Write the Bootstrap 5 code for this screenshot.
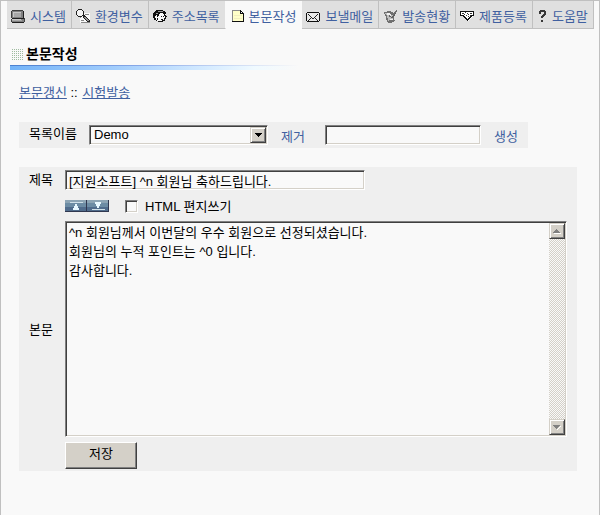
<!DOCTYPE html>
<html lang="ko">
<head>
<meta charset="utf-8">
<meta name="viewport" content="width=device-width, initial-scale=1">
<title>본문작성</title>
<link rel="stylesheet" href="https://cdn.jsdelivr.net/npm/bootstrap@5.3.0/dist/css/bootstrap.min.css">
<style>
body, input, textarea, select, button { font-family: "Liberation Sans", "Noto Sans CJK KR", sans-serif; font-size: 13px; line-height: 19px; color: #000; }
body { background: #f9f9f9; }
a { color: #4060a0; }
svg { display: block; flex: none; shape-rendering: crispEdges; }
.page-frame { border: 1px solid #c0c0c0; border-bottom: 0; }
.tabs { margin: 0 6px; }
.tab { height: 28px; gap: 5px; padding: 3px 5px 0 4px; background: #e0e0e0; border-right: 1px solid #c0c0c0; border-bottom: 1px solid #c0c0c0; text-decoration: none; white-space: nowrap; }
.tab span { padding-top: 1px; }
.tab.current { background: #f9f9f9; border-color: #f9f9f9; }
.tab.before { border-right-color: #f9f9f9; }
.heading { margin: 16px 0 0 10px; gap: 3px; }
.heading h1 { font-size: 14px; line-height: 19px; font-weight: 700; margin: 0; }
.dots { width: 12px; height: 12px; background: conic-gradient(#a0bca0 25%, transparent 0) 0 0 / 2px 2px; }
.rule { height: 5px; max-width: 288px; margin-left: 9px; margin-top: 1px; border-top: 1px solid; border-image: linear-gradient(90deg, #4a80d0, #88a8e8 45%, #c8d8f4 75%, #f9f9f9) 1; background: linear-gradient(90deg, #74b4f8, #a0ccfc 35%, #d0e8ff 65%, #f0faff 85%, #f9f9f9); }
.links { margin: 13px 0 0 18px; }
.links a + a { margin-left: 1px; }
.panel { background: #efefef; margin-left: 18px; }
.list-panel { margin-top: 20px; height: 26px; padding: 3px 10px; width: fit-content; }
.list-panel > label { width: 60px; line-height: 18px; }
.list-panel > a { padding: 2px 0 0 13px; }
.edit-panel { margin-top: 19px; margin-right: 22px; padding: 3px 10px 2px; }
.edit-label { width: 36px; flex: none; }
.sunken { border: 1px solid; border-color: #808080 #fff #fff #808080; box-shadow: inset 1px 1px #404040, inset -1px -1px #d4d0c8; background: #f9f9f9; border-radius: 0; }
.line-box { height: 20px; padding: 0 3px; line-height: 18px; }
.list-select { width: 179px; }
.list-select select { appearance: none; border: 0; background: none; padding: 0 20px 0 4px; height: 17px; line-height: 17px; width: 100%; display: block; }
.raised { background: #d4d0c8; border: 1px solid; border-color: #d4d0c8 #404040 #404040 #d4d0c8; box-shadow: inset 1px 1px #fff, inset -1px -1px #808080; padding: 0; border-radius: 0; }
.drop-mark { top: 1px; right: 1px; width: 16px; height: 16px; pointer-events: none; }
.new-name { width: 156px; }
.subject { width: 300px; }
.size-btn { border: 0; padding: 0; }
.size-row { padding: 6px 0 5px; height: 31px; }
.tick { appearance: none; width: 13px; height: 13px; margin: 0 7px 0 16px; }
.tick:checked { background: #404040; background-clip: content-box; padding: 3px; }
.body-box { height: 216px; padding: 1px; }
.body-box textarea { border: 0; background: none; resize: none; outline: 0; padding: 0 2px; min-width: 0; overflow: hidden; }
.bar { width: 16px; background: repeating-conic-gradient(#d4d0c8 0 25%, #f9f9f9 0 50%) 0 0 / 2px 2px; }
.bar button { width: 16px; height: 16px; }
.save { width: 72px; height: 27px; margin-top: 5px; border-color: #fff #404040 #404040 #fff; box-shadow: inset -1px -1px #808080; padding-bottom: 4px; }
</style>
<script src="https://cdn.jsdelivr.net/npm/bootstrap@5.3.0/dist/js/bootstrap.bundle.min.js"></script>
</head>
<body>
<div class="page-frame min-vh-100">
  <nav class="tabs d-flex">
    <a class="tab d-flex align-items-center" href="#"><svg width="14" height="14" viewBox="0 0 14 14"><path fill="#404040" d="M1 1h11v1h1v7h1v4h-1v1H1v-1H0v-3h1V9H0V2h1z"/><path fill="#808080" d="M1 2h11v7H1zM1 10h12v3H1z"/><path fill="#c8c8c8" d="M2 3h8v5H2zM1 10h9v1H1z"/><path fill="#a8a8a8" d="M3 4h7v4H3zM1 11h10v1H1z"/><path fill="#202020" d="M12 2h1v7h-1zM1 9h12v1H1zM1 13h12v1H1z"/></svg><span>시스템</span></a>
    <a class="tab d-flex align-items-center" href="#"><svg width="14" height="14" viewBox="0 0 14 14"><path fill="#f9f9f9" d="M5 4h9v10H4V8z"/><path fill="#888" d="M9 5h4v1H9zM4 8h1v1H4zM5 11h3v1H5zM5 13h9v1H5zM11 11h2v1h-2z"/><path fill="#222" d="M2 0h4v1H2zM1 1h1v1H1zM6 1h1v1H6zM0 2h1v4H0zM7 2h1v4H7zM1 6h1v1H1zM2 7h4v1H2zM6 6h2v1H6zM7 7h2v1H7zM8 6h1v1H8zM7 8h1v1H7zM9 7h1v1H9zM8 9h1v1H8zM10 8h1v1h-1zM9 10h1v1H9zM11 9h1v1h-1zM10 11h1v1h-1zM12 10h1v1h-1zM11 12h3v1h-3zM13 11h1v1h-1z"/><path fill="#f4f4f4" d="M2 1h4v1h1v4H6v1H2V6H1V2h1z"/><path fill="#999" d="M8 8h2v1H8zM9 9h2v1H9zM10 10h2v1h-2zM11 11h2v1h-2z"/></svg><span>환경변수</span></a>
    <a class="tab before d-flex align-items-center" href="#"><svg width="14" height="14" viewBox="0 0 14 14"><path fill="#f9f9f9" d="M3 3h8l2 3v3l-3 4H5L1 9V5z"/><path fill="#111" d="M3 1h7v1h2v1h1v2h-1v1h1v1h1v1h-1v2h-1v2h-2v1H5v-1h4v-1h2V9h1V7h-1V5h-1V4H7v1H6v2H5v1H4V6H3v1H2v2h1v2h1v1H3v-1H1V9H0V4h1V3h1V2h1zM8 7h1v1H8zM10 7h1v1h-1zM8 10h2v1H8zM4 9h1v2H4z"/><path fill="#999" d="M5 2h5v1H5zM3 4h2v1H3z"/></svg><span>주소목록</span></a>
    <a class="tab current d-flex align-items-center" href="#" aria-current="page"><svg width="14" height="14" viewBox="0 0 14 14"><path fill="#ffffc8" d="M3 2h8l2 3v8H3z"/><path fill="#888" d="M2 1h9v1H3v10H2z"/><path fill="#f2eec0" d="M4 6h8v1H4zM4 9h8v1H4z"/><path fill="#111" d="M10 1h1v1h1v1h1v1h1v9H2v-1h11V5h-3z"/><path fill="#fff" d="M11 3h1v1h-1z"/></svg><span>본문작성</span></a>
    <a class="tab d-flex align-items-center" href="#"><svg width="14" height="14" viewBox="0 0 14 14"><path fill="#111" d="M0 4h1V3h12v1h1v8h-1v1H1v-1H0z"/><path fill="#e8e8e8" d="M1 4h12v8H1z"/><path fill="#222" d="M2 5h1v1H2zM3 6h1v1H3zM4 7h1v1H4zM5 8h1v1H5zM6 9h2v1H6zM8 8h1v1H8zM9 7h1v1H9zM10 6h1v1h-1zM11 5h1v1h-1zM4 9h1v1H4zM3 10h1v1H3zM2 11h1v1H2zM9 9h1v1H9zM10 10h1v1h-1zM11 11h1v1h-1z"/></svg><span>보낼메일</span></a>
    <a class="tab d-flex align-items-center" href="#"><svg width="14" height="14" viewBox="0 0 14 14"><path fill="#707070" d="M1 3h3V2h4v1h2v1h1V3h1V2h1V1h1v2h-1v1h-1v2h-1v5h1v1h-1v1H9v1H5v-1H4v-2H3V7H2V5H1z"/><path fill="#bdbdbd" d="M2 4h5v1h1v1h3v2h-1v3H6v1H5V9H4V6H3V5H2z"/><path fill="#f0f0f0" d="M4 4h3v1h1v2H7v1H6V6H4zM7 10h3v1H7z"/><path fill="#606060" d="M6 6h1v1h1v1h1V7h1V6h1V5h1V4h1v1h-1v2h-1v1h-1v1H8V8H6z"/></svg><span>발송현황</span></a>
    <a class="tab d-flex align-items-center" href="#"><svg width="14" height="14" viewBox="0 0 14 14"><path fill="#fff" d="M1 3h12v4l-5 5-5-5H1z"/><path fill="#111" d="M0 2h14v5h-2v1h-1v1h-1v1H9v1H8v1H7v-1H6v-1H5V9H4V8H3V7H0zM1 3v3h3v1h1v1h1v1h1v1h1V9h1V8h1V7h1V6h2V3z"/><path fill="#333" d="M2 4h2v1H2zM5 3h1v1H5zM7 4h1v1H7zM10 4h2v1h-2zM4 5h1v1H4zM6 6h1v1H6zM8 5h1v1H8zM8 7h1v1H8zM10 6h1v1h-1z"/></svg><span>제품등록</span></a>
    <a class="tab d-flex align-items-center" href="#"><svg width="10" height="14" viewBox="0 0 10 14"><path fill="#383838" d="M3 1h5v1h1v4H8v1H7v1H6v1H4V7h1V6h1V5h1V3H4v2H2V2h1zM4 11h2v2H4z"/></svg><span>도움말</span></a>
  </nav>

  <header>
    <div class="heading d-flex align-items-center"><span class="dots"></span><h1>본문작성</h1></div>
    <div class="rule"></div>
  </header>
  <div class="links"><a href="#">본문갱신</a> :: <a href="#">시험발송</a></div>

  <form>
    <div class="panel list-panel d-flex">
      <label for="list">목록이름</label>
      <div class="list-select sunken line-box p-0 position-relative">
        <select id="list"><option>Demo</option></select>
        <span class="drop-mark raised position-absolute d-flex align-items-center justify-content-center"><svg width="7" height="4" viewBox="0 0 7 4"><path d="M0 0h7v1H6v1H5v1H4v1H3V3H2V2H1V1H0z"/></svg></span>
      </div>
      <a class="text-decoration-none me-3" href="#">제거</a>
      <input class="new-name sunken line-box ms-1" type="text" aria-label="새 목록이름">
      <a class="text-decoration-none" href="#">생성</a>
    </div>

    <div class="panel edit-panel">
      <div class="d-flex">
        <label class="edit-label" for="subject">제목</label>
        <input id="subject" class="subject sunken line-box" type="text" value="[지원소프트] ^n 회원님 축하드립니다.">
      </div>
      <div class="d-flex">
        <div class="edit-label"></div>
        <div class="size-row d-flex align-items-center">
          <button class="size-btn" type="button" aria-label="본문 줄이기"><svg width="22" height="12" viewBox="0 0 22 12"><path fill="#6c8ca4" d="M0 0h22v12H0z"/><path fill="#8ca4b4" d="M0 0h22v3H0z"/><path fill="#506c8c" d="M0 7h22v4H0z"/><path fill="#303850" d="M0 11h22v1H0zM21 0h1v12h-1z"/><path fill="#d0e0e8" d="M5 2h13v1H5z"/><path fill="#e8f8ff" d="M10 4h2v2h1v2h1v2H8V8h1V6h1z"/></svg></button>
          <button class="size-btn" type="button" aria-label="본문 늘리기"><svg width="22" height="12" viewBox="0 0 22 12"><path fill="#6c8ca4" d="M0 0h22v12H0z"/><path fill="#8ca4b4" d="M0 0h22v3H0z"/><path fill="#506c8c" d="M0 7h22v4H0z"/><path fill="#303850" d="M0 11h22v1H0zM21 0h1v12h-1z"/><path fill="#d0e0e8" d="M5 9h13v1H5z"/><path fill="#e8f8ff" d="M8 2h6v2h-1v2h-1v2h-2V6H9V4H8z"/></svg></button>
          <input class="tick sunken" id="html" type="checkbox">
          <label for="html">HTML 편지쓰기</label>
        </div>
      </div>
      <div class="d-flex">
        <label class="edit-label align-self-center" for="content">본문</label>
        <div class="body-box sunken d-flex flex-fill">
          <textarea id="content" class="flex-fill">^n 회원님께서 이번달의 우수 회원으로 선정되셨습니다.
회원님의 누적 포인트는 ^0 입니다.
감사합니다.</textarea>
          <div class="bar d-flex flex-column justify-content-between">
            <button class="raised d-flex align-items-center justify-content-center" type="button" aria-label="위로"><svg width="8" height="5" viewBox="0 0 8 5"><path fill="#fff" d="M1 4h7v1H1z"/><path fill="#808080" d="M3 0h1v1h1v1h1v1h1v1H0V3h1V2h1V1h1z"/></svg></button>
            <button class="raised d-flex align-items-center justify-content-center" type="button" aria-label="아래로"><svg width="8" height="5" viewBox="0 0 8 5"><path fill="#fff" d="M7 1h1v1H7v1H6v1H5v1H4V4h1V3h1V2h1z"/><path fill="#808080" d="M0 0h7v1H6v1H5v1H4v1H3V3H2V2H1V1H0z"/></svg></button>
          </div>
        </div>
      </div>
      <div class="d-flex"><div class="edit-label"></div><button class="save raised" type="submit">저장</button></div>
    </div>
  </form>
</div>
</body>
</html>
